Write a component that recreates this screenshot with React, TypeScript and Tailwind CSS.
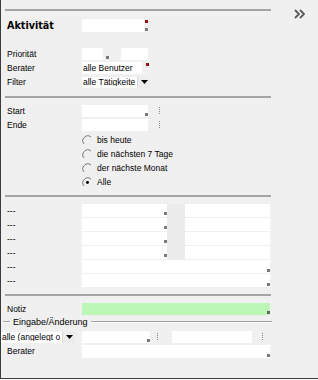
import React from "react";
import clsx from "clsx";

const Mark = ({ red, className }: { red?: boolean; className?: string }) => (
  <span
    className={clsx(
      "absolute w-[3px] h-[3px]",
      red ? "bg-[#8e1212]" : "bg-[#7a7a7a]",
      className
    )}
  />
);

const Dots = ({ className }: { className?: string }) => (
  <svg width="3" height="8" viewBox="0 0 3 8" className={clsx("shrink-0", className)}>
    <rect x="1" y="0" width="1" height="1" fill="#8a8a8a" />
    <rect x="1" y="2" width="1" height="1" fill="#8a8a8a" />
    <rect x="1" y="4" width="1" height="1" fill="#8a8a8a" />
    <rect x="1" y="6" width="1" height="1" fill="#8a8a8a" />
  </svg>
);

const Arrow = () => (
  <span className="w-[13px] h-full bg-[#ececec] border-l border-[#d8d8d8] flex items-center justify-center">
    <svg width="7" height="4" viewBox="0 0 7 4">
      <path d="M0 0h7L3.5 4z" fill="#000" />
    </svg>
  </span>
);

const Radio = ({ on }: { on?: boolean }) => (
  <svg width="11" height="11" viewBox="0 0 12 12" className="shrink-0">
    <path d="M9.8 2.2A5.4 5.4 0 0 0 2.2 9.8" stroke="#6a6a6a" fill="none" />
    {on && <circle cx="6" cy="6" r="1.6" fill="#000" />}
  </svg>
);

const Sep = ({ className }: { className?: string }) => (
  <div className={clsx("ml-[4px] w-[266px] h-[2px] bg-[#a4a4a4]", className)} />
);

const Label = ({ children, bold }: { children: React.ReactNode; bold?: boolean }) => (
  <span
    className={clsx(
      "w-[81px] pl-[6px] shrink-0 leading-none",
      bold && "font-['DejaVu_Sans'] font-bold text-[9.6px]"
    )}
  >
    {children}
  </span>
);

const radios = ["bis heute", "die nächsten 7 Tage", "der nächste Monat", "Alle"];

export default function App() {
  return (
    <div className="w-[318px] h-[379px] bg-[#f0f0f0] border-l border-b border-[#3c3c3c] flex font-['Liberation_Sans',Arial,sans-serif] text-[8.5px] text-black">
      <div className="w-[271px] flex flex-col pt-[9px]">
        <Sep />

        <div className="flex items-center h-[13px] mt-[8px]">
          <Label bold>Aktivität</Label>
          <div className="relative w-[62px] h-[13px] bg-white">
            <Mark red className="left-[63px] top-[1px]" />
            <Mark className="left-[63px] top-[9px]" />
          </div>
        </div>

        <div className="flex items-center h-[14px] mt-[15px]">
          <Label>Priorität</Label>
          <div className="relative w-[21px] h-[12px] bg-white">
            <Mark className="left-[24px] top-[8px]" />
          </div>
          <div className="ml-[18px] w-[27px] h-[12px] bg-white" />
        </div>

        <div className="flex items-center h-[14px]">
          <Label>Berater</Label>
          <div className="relative w-[60px] h-[12px] bg-white flex items-center pl-[1px] leading-none">
            alle Benutzer
            <Mark red className="left-[64px] top-[1px]" />
          </div>
        </div>

        <div className="flex items-center h-[14px]">
          <Label>Filter</Label>
          <div className="w-[68px] h-[11px] bg-white flex items-center justify-between pl-[1px] leading-none">
            <span className="overflow-hidden whitespace-nowrap">alle Tätigkeite</span>
            <Arrow />
          </div>
        </div>

        <Sep className="mt-[7px]" />

        {["Start", "Ende"].map((l, i) => (
          <div key={l} className={clsx("flex items-center h-[14px]", i === 0 && "mt-[6px]")}>
            <Label>{l}</Label>
            <div className="relative w-[66px] h-[12px] bg-white">
              {i === 0 && <Mark className="left-[63px] top-[8px]" />}
            </div>
            <Dots className="ml-[10px]" />
          </div>
        ))}

        <div className="flex flex-col mt-[1px] ml-[81px]">
          {radios.map((r, i) => (
            <div key={r} className="flex items-center h-[14px] gap-[4px]">
              <Radio on={i === 3} />
              <span className="leading-none">{r}</span>
            </div>
          ))}
        </div>

        <Sep className="mt-[6px]" />

        <div className="flex flex-col mt-[7px]">
          {[0, 1, 2, 3].map((i) => (
            <div key={i} className="flex h-[14px]">
              <Label>
                <span className="block pt-[3px]">---</span>
              </Label>
              <div className="relative w-[85px] h-[13px] bg-white">
                <Mark className="left-[82px] top-[8px]" />
              </div>
              <div className="w-[18px] h-[14px] bg-[#ececec]" />
              <div className="w-[85px] h-[13px] bg-white" />
            </div>
          ))}
          {[4, 5].map((i) => (
            <div key={i} className="flex h-[14px]">
              <Label>
                <span className="block pt-[3px]">---</span>
              </Label>
              <div className="relative w-[188px] h-[13px] bg-white">
                <Mark className="left-[185px] top-[9px]" />
              </div>
            </div>
          ))}
        </div>

        <Sep className="mt-[6px]" />

        <div className="flex items-center h-[12px] mt-[7px]">
          <Label>Notiz</Label>
          <div className="relative w-[188px] h-[12px] bg-[#bcf7b7]">
            <Mark className="left-[185px] top-[8px] !bg-[#5e6b5e]" />
          </div>
        </div>

        <div className="flex items-center h-[12px] mt-[1px] pl-[2px]">
          <div className="w-[7px] h-[2px] border-t border-b border-t-[#a0a0a0] border-b-white" />
          <span className="px-[3px] text-[9px] leading-none">Eingabe/Änderung</span>
          <div className="flex-1 h-[2px] border-t border-b border-t-[#a0a0a0] border-b-white" />
        </div>

        <div className="flex items-center h-[12px] mt-[3px]">
          <div className="w-[74px] h-[11px] bg-white flex items-center justify-between pl-[1px] leading-none">
            <span className="overflow-hidden whitespace-nowrap">alle (angelegt o</span>
            <Arrow />
          </div>
          <div className="relative ml-[7px] w-[68px] h-[12px] bg-white">
            <Mark className="left-[65px] top-[8px]" />
          </div>
          <Dots className="ml-[6px]" />
          <div className="ml-[13px] w-[80px] h-[12px] bg-white" />
          <Dots className="ml-[9px]" />
        </div>

        <div className="flex items-center h-[13px] mt-[2px]">
          <Label>Berater</Label>
          <div className="relative w-[188px] h-[13px] bg-white">
            <Mark className="left-[185px] top-[9px]" />
          </div>
        </div>
      </div>

      <div className="flex-1 flex justify-end pr-[13px] pt-[9px]">
        <svg width="11" height="10" viewBox="0 0 11 10">
          <path d="M1 1l4 4-4 4M6 1l4 4-4 4" stroke="#5a5a5a" strokeWidth="1.8" fill="none" />
        </svg>
      </div>
    </div>
  );
}
